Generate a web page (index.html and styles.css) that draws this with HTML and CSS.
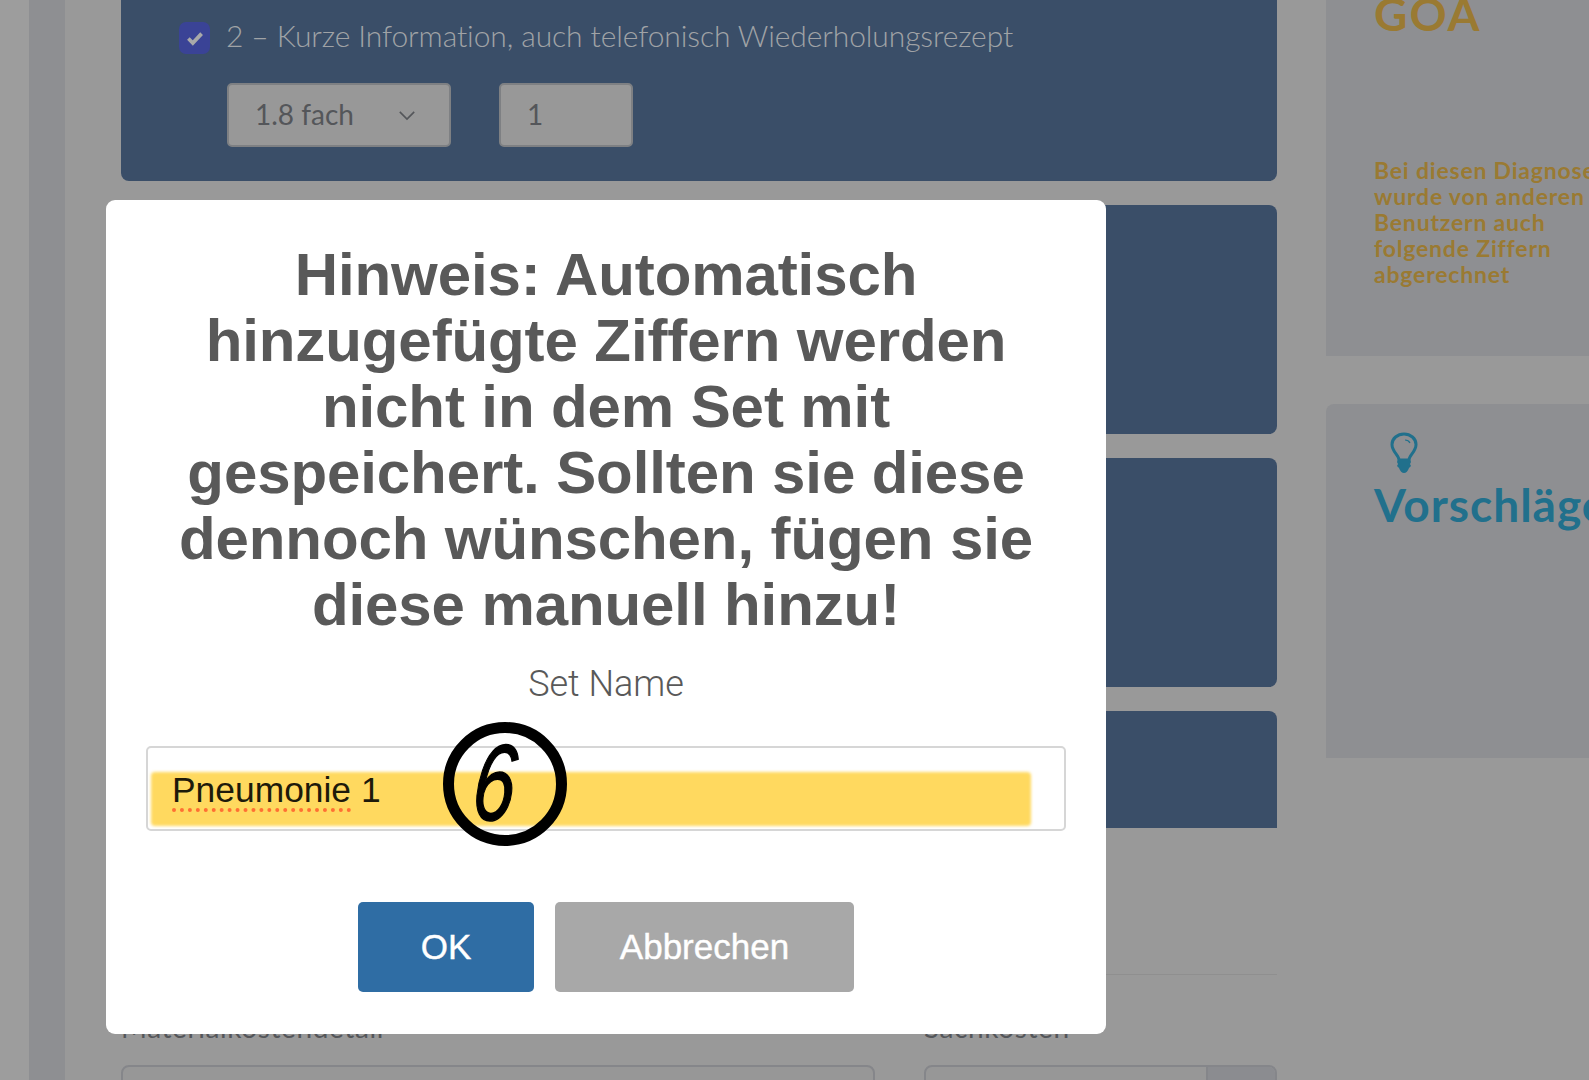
FILE: index.html
```html
<!DOCTYPE html>
<html lang="de">

<head>
    <meta charset="UTF-8" />
    <title>Set speichern</title>
    <link rel="stylesheet" href="styles.css">
</head>

<body>
    <div class="page">
        <div class="rail">
            <div class="rail-edge"></div>
            <div class="rail-strip"></div>
        </div>

        <main class="main">
            <section class="card card-first">
                <div class="check-row">
                    <span class="checkbox">
                        <svg viewBox="0 0 20 20" width="22" height="22">
                            <path d="M4 10.500l4 4 8-8.500" fill="none" stroke="#a9a9a9" stroke-width="3.400" />
                        </svg>
                    </span>
                    <span class="check-label">2 – Kurze Information, auch telefonisch Wiederholungsrezept</span>
                </div>
                <div class="control-row">
                    <div class="control control-select">
                        <span>1.8 fach</span>
                        <svg viewBox="0 0 20 12" width="18" height="11">
                            <path d="M2 2l8 8 8-8" fill="none" stroke="#54565a" stroke-width="1.800" />
                        </svg>
                    </div>
                    <div class="control control-number"><span>1</span></div>
                </div>
            </section>
            <section class="card card-tall"></section>
            <section class="card card-tall"></section>
            <section class="card card-open"></section>

            <div class="divider"></div>

            <div class="cost-row">
                <div>
                    <div class="cost-label">Materialkostendetail</div>
                    <div class="cost-input"></div>
                </div>
                <div>
                    <div class="cost-label">Sachkosten</div>
                    <div class="cost-input cost-input-addon">
                        <div class="addon"></div>
                    </div>
                </div>
            </div>
        </main>

        <aside class="side">
            <section class="panel panel-goa">
                <div class="panel-title goa-title">GOA</div>
                <p class="goa-text">Bei diesen Diagnosen<br>wurde von anderen<br>Benutzern auch<br>folgende Ziffern<br>abgerechnet</p>
            </section>
            <section class="panel panel-tips">
                <svg class="bulb" viewBox="0 0 28 41" width="28" height="41">
                    <path d="M9 28c0-5-7-8-7-15.500C2 6.500 7.500 2 14 2s12 4.500 12 10.500C26 20 19 23 19 28z" fill="none" stroke="#21708c" stroke-width="3" />
                    <path d="M15 8c2 0 4 1 5 3" fill="none" stroke="#21708c" stroke-width="1.200" />
                    <path d="M8 28h12l1 2-1 2 1 2-2 2c-1 3-3 5-5 5s-4-2-5-5l-2-2 1-2-1-2z" fill="#21708c" />
                </svg>
                <div class="panel-title tips-title">Vorschläge</div>
            </section>
        </aside>

        <div class="modal">
            <h2 class="modal-title">Hinweis: Automatisch hinzugefügte Ziffern werden nicht in dem Set mit gespeichert. Sollten sie diese dennoch wünschen, fügen sie diese manuell hinzu!</h2>
            <div class="modal-label">Set Name</div>
            <div class="name-input">
                <div class="marker"></div>
                <span class="name-value"><span class="spell-error">Pneumonie</span> 1</span>
            </div>
            <div class="modal-buttons">
                <button class="btn btn-ok">OK</button>
                <button class="btn btn-cancel">Abbrechen</button>
            </div>
            <div class="step-badge"><span>6</span></div>
        </div>
    </div>
</body>

</html>
```

FILE: styles.css
```css
body {
    margin: 0;
    padding: 0;
    background: #999999;
    font-family: "Lato", "Liberation Sans", sans-serif;
}

.page {
    position: relative;
    display: flex;
    height: 1080px;
    overflow: hidden;
}

/* dimmed page behind the dialog */
.rail {
    display: flex;
    flex: 0 0 121px;
}

.rail-edge {
    width: 29px;
    background: #9d9d9d;
}

.rail-strip {
    width: 36px;
    background: #8e8f92;
}

.main {
    flex: 0 0 1156px;
}

.card {
    background: #3a4e68;
    border-radius: 8px;
    margin-bottom: 24px;
}

.card-first {
    height: 181px;
    border-radius: 0 0 8px 8px;
    padding: 22px 0 0 58px;
    box-sizing: border-box;
}

.card-tall {
    height: 229px;
}

.card-open {
    height: 117px;
    border-radius: 8px 8px 0 0;
    margin-bottom: 0;
}

.check-row {
    display: flex;
    align-items: center;
    gap: 16px;
}

.checkbox {
    display: flex;
    align-items: center;
    justify-content: center;
    width: 31px;
    height: 32px;
    background: #3a4396;
    border-radius: 7px;
}

.check-label {
    margin-top: -6px;
    color: #a0a3a6;
    font-size: 30px;
    font-weight: 300;
    letter-spacing: -.1px;
}

.control-row {
    display: flex;
    gap: 48px;
    margin: 29px 0 0 48px;
}

.control {
    display: flex;
    align-items: center;
    justify-content: space-between;
    height: 64px;
    box-sizing: border-box;
    background: #989898;
    border: 2px solid #7e8083;
    border-radius: 5px;
    color: #54565a;
    font-size: 28px;
    padding: 0 26px 2px;
}

.control-select {
    width: 224px;
}

.control-select svg {
    margin: 2px 7px 0 0;
}

.control-number {
    width: 134px;
}

.divider {
    height: 1px;
    background: #8f8f8f;
    margin-top: 146px;
}

.cost-row {
    display: grid;
    grid-template-columns: 754px 353px;
    gap: 49px;
    margin-top: 37px;
}

.cost-label {
    color: #54565a;
    font-size: 28px;
    letter-spacing: .6px;
    line-height: 31px;
    margin-bottom: 22px;
}

.cost-input {
    height: 60px;
    box-sizing: border-box;
    background: #979797;
    border: 2px solid #85868a;
    border-radius: 8px;
}

.cost-input-addon {
    display: flex;
    justify-content: flex-end;
    overflow: hidden;
}

.addon {
    width: 67px;
    background: #8b8c90;
    border-left: 2px solid #85868a;
}

.side {
    flex: 1;
    margin-left: 49px;
    min-width: 0;
    overflow: hidden;
}

.panel {
    background: #8e8f92;
    padding-left: 48px;
    white-space: nowrap;
}

.panel-goa {
    display: flow-root;
    height: 356px;
    box-sizing: border-box;
    margin-bottom: 48px;
}

.panel-tips {
    height: 354px;
    box-sizing: border-box;
    padding-top: 28px;
    border-radius: 8px 0 0 0;
}

.panel-title {
    font-size: 46px;
    font-weight: 700;
    line-height: 56px;
    letter-spacing: 1px;
}

.goa-title {
    color: #9a7a32;
    margin-top: -14px;
    letter-spacing: 2px;
}

.goa-text {
    margin: 115px 0 0;
    color: #9a7a32;
    font-size: 23px;
    font-weight: 700;
    line-height: 26px;
    letter-spacing: .8px;
}

.bulb {
    display: block;
    margin-left: 16px;
}

.tips-title {
    color: #21708c;
    margin-top: 4px;
}

/* dialog */
.modal {
    position: absolute;
    left: 106px;
    top: 200px;
    width: 1000px;
    height: 834px;
    box-sizing: border-box;
    padding: 42px 40px 0;
    background: #ffffff;
    border-radius: 9px;
    font-family: "Liberation Sans", Arial, sans-serif;
    text-align: center;
}

.modal-title {
    margin: 0 20px;
    color: #595959;
    font-size: 60px;
    font-weight: 700;
    line-height: 66px;
    letter-spacing: -.1px;
}

.modal-label {
    margin-top: 24px;
    color: #595959;
    font-family: "Roboto", "Liberation Sans", sans-serif;
    font-size: 36px;
    font-weight: 300;
    line-height: 44px;
}

.name-input {
    position: relative;
    height: 85px;
    width: 920px;
    box-sizing: border-box;
    margin-top: 40px;
    border: 2px solid #d6d6d6;
    border-radius: 5px;
    text-align: left;
}

.marker {
    position: absolute;
    left: 3px;
    top: 24px;
    width: 880px;
    height: 54px;
    background: #ffd95f;
    border-radius: 4px;
    filter: blur(1.500px);
}

.name-value {
    position: absolute;
    left: 24px;
    top: 20px;
    color: #1d1a0a;
    font-size: 35.400px;
    line-height: 44px;
}

.spell-error {
    text-decoration: underline dotted #ff7033 4px;
    text-underline-offset: 6px;
}

.modal-buttons {
    display: flex;
    justify-content: center;
    gap: 21px;
    margin: 71px 0 0;
}

.btn {
    height: 90px;
    border: none;
    border-radius: 5px;
    color: #ffffff;
    font-family: "Liberation Sans", Arial, sans-serif;
    font-size: 35px;
    -webkit-text-stroke: .4px #ffffff;
}

.btn-ok {
    width: 176px;
    background: #2f6da4;
}

.btn-cancel {
    width: 299px;
    background: #a8a8a8;
}

.step-badge {
    position: absolute;
    left: 337px;
    top: 522px;
    display: flex;
    align-items: center;
    justify-content: center;
    width: 124px;
    height: 124px;
    box-sizing: border-box;
    border: 11px solid #000000;
    border-radius: 50%;
    color: #000000;
    font-size: 108px;
    font-style: italic;
    line-height: 100px;
    -webkit-text-stroke: 1.500px #000000;
}

.step-badge span {
    display: block;
    transform: translate(-10px, -1px) scaleX(.7) skewX(-8deg);
}
```
